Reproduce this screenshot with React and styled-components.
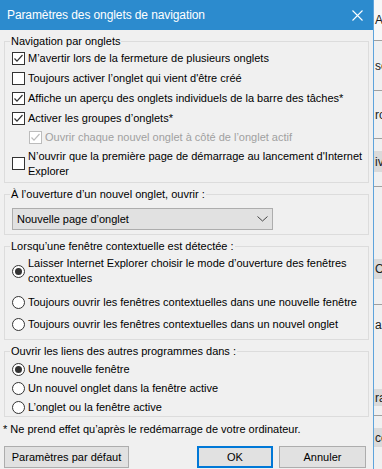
import React from "react";
import styled, { createGlobalStyle } from "styled-components";

const GlobalStyle = createGlobalStyle`
  html, body {
    margin: 0;
    padding: 0;
    background: #F0F0F0;
    overflow: hidden;
  }
  body {
    font-family: "Liberation Sans", Arial, sans-serif;
    font-size: 11px;
    color: #000;
  }
`;

const Screen = styled.div`
  display: flex;
  width: 382px;
  height: 469px;
  overflow: hidden;
  background: #F0F0F0;
`;

const Dialog = styled.div`
  display: flex;
  flex-direction: column;
  width: 374px;
  flex-shrink: 0;
  box-sizing: border-box;
  overflow: hidden;
  border-right: 1px solid #5EA4DC;
  background: #F0F0F0;

  & > * {
    flex-shrink: 0;
  }
`;

const TitleBar = styled.div`
  display: flex;
  align-items: center;
  justify-content: space-between;
  height: 30px;
  padding: 0 10px 0 7px;
  background: #2C8BCE;
  color: #fff;
  font-size: 12px;
  letter-spacing: -0.1px;
`;

const Body = styled.div`
  display: flex;
  flex-direction: column;
  gap: 4px;
  padding: 4px 4px 0 4px;

  & > * {
    flex-shrink: 0;
  }
`;

const Group = styled.fieldset`
  margin: 0;
  min-width: 0;
  border: 1px solid #DCDCDC;
  padding: 0 6px ${({ $pb }) => $pb}px 7px;
`;

const Legend = styled.legend`
  padding: 0 1px;
  margin-left: -2px;
  line-height: 14px;
`;

const Row = styled.div`
  display: flex;
  align-items: center;
  gap: 3px;
  height: ${({ $h }) => $h}px;
  margin-top: ${({ $mt }) => $mt || 0}px;
  padding-left: ${({ $indent }) => $indent || 0}px;
  color: ${({ $disabled }) => ($disabled ? "#A0A0A0" : "#000")};
  line-height: 15px;
  white-space: nowrap;
`;

const Box = styled.span`
  display: flex;
  align-items: center;
  justify-content: center;
  width: 13px;
  height: 13px;
  flex-shrink: 0;
  box-sizing: border-box;
  background: #fff;
  border: 1px solid ${({ $disabled }) => ($disabled ? "#BCBCBC" : "#333333")};
  border-radius: ${({ $round }) => ($round ? "50%" : "0")};
`;

const Dot = styled.span`
  width: 7px;
  height: 7px;
  border-radius: 50%;
  background: #333333;
`;

const Select = styled.div`
  display: flex;
  align-items: center;
  justify-content: space-between;
  width: 261px;
  height: 22px;
  margin: 7px 0 0 0;
  box-sizing: border-box;
  padding: 0 4px 0 4px;
  background: #E1E1E1;
  border: 1px solid #ADADAD;
`;

const Footnote = styled.div`
  margin: 1px 0 0 -1px;
  line-height: 15px;
`;

const ButtonBar = styled.div`
  display: flex;
  align-items: center;
  gap: 6px;
  margin-top: 5px;
  padding-right: 3px;
`;

const Button = styled.div`
  display: flex;
  align-items: center;
  justify-content: center;
  width: ${({ $w }) => $w}px;
  height: 22px;
  box-sizing: border-box;
  background: #E1E1E1;
  border: ${({ $primary }) => ($primary ? "2px solid #0078D7" : "1px solid #ADADAD")};
  margin-left: ${({ $push }) => ($push ? "auto" : "0")};
`;

const Backdrop = styled.div`
  display: flex;
  flex-direction: column;
  flex: 1;
  overflow: hidden;
  background: #F0F0F0;
  font-size: 12px;
  color: #1A1A1A;
`;

const Strip = styled.div`
  display: flex;
  align-items: center;
  flex-shrink: 0;
  height: ${({ $h }) => $h}px;
  background: ${({ $bg }) => $bg || "transparent"};
  border-bottom: ${({ $line }) => ($line ? "1px solid #A0A0A0" : "none")};
  white-space: nowrap;
  padding-left: 1px;
`;

function Check({ checked, disabled }) {
  return (
    <Box $disabled={disabled}>
      {checked && (
        <svg width="11" height="11" viewBox="0 0 11 11">
          <path
            d="M1.5 5.5 L4 8.2 L9.5 2"
            fill="none"
            stroke={disabled ? "#BCBCBC" : "#333333"}
            strokeWidth="1.2"
          />
        </svg>
      )}
    </Box>
  );
}

function Radio({ checked }) {
  return <Box $round>{checked && <Dot />}</Box>;
}

export default function App() {
  return (
    <>
      <GlobalStyle />
      <Screen>
        <Dialog>
          <TitleBar>
            <span>Paramètres des onglets de navigation</span>
            <svg width="11" height="11" viewBox="0 0 11 11">
              <path d="M0.5 0.5 L10.5 10.5 M10.5 0.5 L0.5 10.5" stroke="#fff" strokeWidth="1.1" />
            </svg>
          </TitleBar>
          <Body>
            <Group $pb={2}>
              <Legend>Navigation par onglets</Legend>
              <Row $h={20}>
                <Check checked />
                M’avertir lors de la fermeture de plusieurs onglets
              </Row>
              <Row $h={20}>
                <Check />
                Toujours activer l’onglet qui vient d'être créé
              </Row>
              <Row $h={20}>
                <Check checked />
                Affiche un aperçu des onglets individuels de la barre des tâches*
              </Row>
              <Row $h={20}>
                <Check checked />
                Activer les groupes d’onglets*
              </Row>
              <Row $h={19} $indent={17} $disabled>
                <Check checked disabled />
                Ouvrir chaque nouvel onglet à côté de l’onglet actif
              </Row>
              <Row $h={33}>
                <Check />
                <span>
                  N’ouvrir que la première page de démarrage au lancement d'Internet
                  <br />
                  Explorer
                </span>
              </Row>
            </Group>

            <Group $pb={4}>
              <Legend>À l’ouverture d’un nouvel onglet, ouvrir :</Legend>
              <Select>
                <span>Nouvelle page d’onglet</span>
                <svg width="11" height="6" viewBox="0 0 11 6">
                  <path d="M0.5 0.5 L5.5 5 L10.5 0.5" fill="none" stroke="#444" strokeWidth="1" />
                </svg>
              </Select>
            </Group>

            <Group $pb={4}>
              <Legend>Lorsqu’une fenêtre contextuelle est détectée :</Legend>
              <Row $h={30} $mt={3}>
                <Radio checked />
                <span>
                  Laisser Internet Explorer choisir le mode d’ouverture des fenêtres
                  <br />
                  contextuelles
                </span>
              </Row>
              <Row $h={22} $mt={5}>
                <Radio />
                Toujours ouvrir les fenêtres contextuelles dans une nouvelle fenêtre
              </Row>
              <Row $h={22}>
                <Radio />
                Toujours ouvrir les fenêtres contextuelles dans un nouvel onglet
              </Row>
            </Group>

            <Group $pb={0}>
              <Legend>Ouvrir les liens des autres programmes dans :</Legend>
              <Row $h={19} $mt={2}>
                <Radio checked />
                Une nouvelle fenêtre
              </Row>
              <Row $h={19}>
                <Radio />
                Un nouvel onglet dans la fenêtre active
              </Row>
              <Row $h={18}>
                <Radio />
                L’onglet ou la fenêtre active
              </Row>
            </Group>

            <Footnote>* Ne prend effet qu’après le redémarrage de votre ordinateur.</Footnote>

            <ButtonBar>
              <Button $w={125}>Paramètres par défaut</Button>
              <Button $w={76} $primary $push>OK</Button>
              <Button $w={87}>Annuler</Button>
            </ButtonBar>
          </Body>
        </Dialog>

        <Backdrop>
          <Strip $h={40} $bg="#F7F7F7" $line>A</Strip>
          <Strip $h={49} $line>se</Strip>
          <Strip $h={47} $line>ro</Strip>
          <Strip $h={12} />
          <Strip $h={21} $bg="#DADADA">iv</Strip>
          <Strip $h={14} $line />
          <Strip $h={72} />
          <Strip $h={20} $bg="#DADADA">Or</Strip>
          <Strip $h={25} $line />
          <Strip $h={40}>as</Strip>
          <Strip $h={44} />
          <Strip $h={17} $bg="#DADADA">ra</Strip>
          <Strip $h={9} $line />
          <Strip $h={12} />
          <Strip $h={19} $bg="#DADADA">ce</Strip>
        </Backdrop>
      </Screen>
    </>
  );
}
